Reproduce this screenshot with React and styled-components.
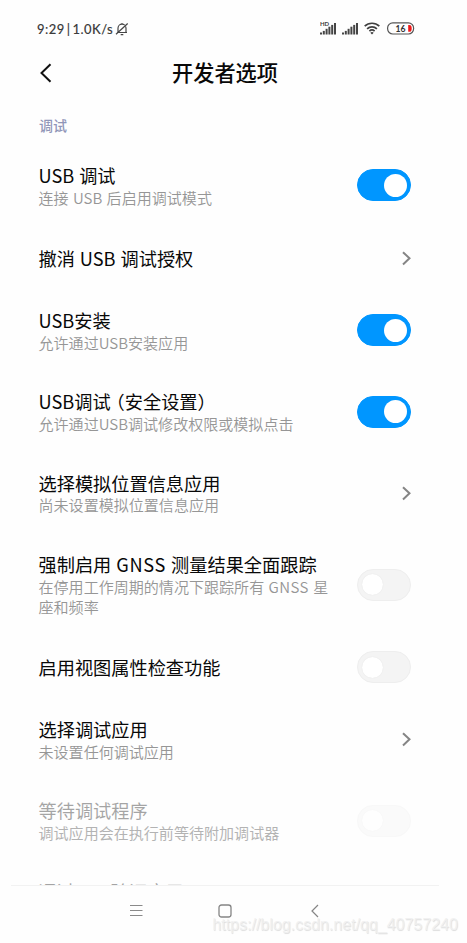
import React from 'react';
import styled, { createGlobalStyle } from 'styled-components';

const Global = createGlobalStyle`
  *, *::before, *::after { box-sizing: border-box; }
  body { margin: 0; background: #fefefe; }
`;

const Screen = styled.div`
  position: relative;
  width: 467px;
  height: 943px;
  overflow: hidden;
  display: flex;
  flex-direction: column;
  background: #fefefe;
  color: #080808;
  font-family: "Noto Sans CJK SC", sans-serif;
`;

const StatusBar = styled.div`
  display: flex;
  align-items: center;
  justify-content: space-between;
  height: 36px;
  padding: 21px 52px 0 37px;
  flex: none;
`;

const StatusGroup = styled.div`
  display: flex;
  align-items: center;
`;

const StatusText = styled.span`
  font: 500 13px/16px Lato, "Noto Sans CJK SC", sans-serif;
  letter-spacing: 0.45px;
  word-spacing: -1.7px;
  color: #3c3c3c;
  white-space: pre;
  -webkit-text-stroke: 0.1px #3c3c3c;
`;

const Header = styled.header`
  display: grid;
  grid-template-columns: 60px 1fr 60px;
  align-items: center;
  height: 73px;
  width: 450px;
  flex: none;
`;

const BackButton = styled.button`
  display: flex;
  justify-content: flex-end;
  padding: 0 8px 0 0;
  border: 0;
  background: none;
`;

const PageTitle = styled.h1`
  margin: -2px 0 0;
  text-align: center;
  font-size: 21.2px;
  line-height: 30px;
  font-weight: 500;
`;

const SectionLabel = styled.div`
  height: 36px;
  padding: 6px 0 0 39px;
  flex: none;
  font-size: 14px;
  line-height: 20px;
  font-weight: 500;
  color: #9096b8;
`;

const List = styled.main`
  flex: 1;
  min-height: 0;
  overflow: hidden;
`;

const Row = styled.div`
  display: flex;
  align-items: center;
  justify-content: space-between;
  height: ${(p) => p.$height}px;
  padding: 0 55.7px 0 38.5px;
  opacity: ${(p) => (p.$disabled ? 0.36 : 1)};
`;

const Texts = styled.div`
  width: 296px;
  margin-top: -0.4px;
`;

const Title = styled.div`
  font-size: 18.2px;
  line-height: 24px;
  word-spacing: 0.9px;
  white-space: nowrap;
`;

const Summary = styled.div`
  font-size: 15.05px;
  line-height: 20.3px;
  margin-top: 0.8px;
  word-spacing: 1px;
  font-weight: ${(p) => (p.$disabled ? 400 : 350)};
  color: ${(p) => (p.$disabled ? '#303030' : '#969696')};
`;

const Spaced = styled.span`
  letter-spacing: ${(p) => p.$by}px;
`;

const Paren = styled.span`
  margin-left: ${(p) => (p.$open ? -4 : 0)}px;
`;

const Switch = styled.span`
  display: flex;
  align-items: center;
  flex: none;
  width: 54px;
  height: 32px;
  border-radius: 16px;
  padding: 0 4px;
  margin-top: -0.5px;
  justify-content: ${(p) => (p.$on ? 'flex-end' : 'flex-start')};
  background: ${(p) => (p.$on ? '#0096ff' : '#f4f4f4')};
  border: 1px solid ${(p) => (p.$on ? '#0096ff' : '#eeeeee')};
`;

const Knob = styled.span`
  width: ${(p) => (p.$on ? 23 : 21)}px;
  height: ${(p) => (p.$on ? 23 : 21)}px;
  margin-right: ${(p) => (p.$on ? -1 : 0)}px;
  border-radius: 50%;
  background: #fff;
  box-shadow: 0 0 1px ${(p) => (p.$on ? 'transparent' : '#dddddd')};
`;

const NavBar = styled.nav`
  display: flex;
  align-items: flex-start;
  height: 58px;
  flex: none;
  margin: 0 28px 0 11px;
  padding: 18px 0 0 118px;
  border-top: 1px solid #f2f2f2;
`;

const NavButton = styled.span`
  display: flex;
  width: 89px;
`;

const Watermark = styled.div`
  position: absolute;
  right: 9px;
  bottom: 9px;
  font: 16px/18px "Liberation Sans", Arial, sans-serif;
  color: rgba(240, 240, 240, 0.9);
  text-shadow: 0.6px 0.6px 0.8px rgba(0, 0, 0, 0.13);
`;

const MutedBell = () => (
  <svg width="14" height="14" viewBox="0 0 14 14" fill="none" stroke="#454545" strokeWidth="1.2">
    <path d="M2 10.5h10M3 10.2V6.2a4 4 0 0 1 8 0v4M7 1v1.2M5.7 12.6h2.6M1 12.3L12.7 1.5" />
  </svg>
);

const SignalBars = ({ hd }) => (
  <svg width="22" height="15" viewBox="0 0 22 15">
    {hd && (
      <text x="0" y="5.2" fontSize="6" fontWeight="700" fontFamily="Lato, sans-serif" fill="#3c3c3c">HD</text>
    )}
    <g fill="#454545">
      <rect x="0" y="11.5" width="2" height="2" />
      <rect x="2.8" y="9.9" width="2" height="3.6" />
      <rect x="5.6" y="7.8" width="2" height="5.7" />
      <rect x="8.4" y="5.7" width="2" height="7.8" />
      <rect x="11.2" y="3.9" width="2" height="9.6" />
      <rect x="14" y="2" width="2" height="11.5" />
    </g>
  </svg>
);

const Wifi = () => (
  <svg width="16" height="13" viewBox="0 0 16 13" fill="none" stroke="#404040" strokeWidth="1.7">
    <path d="M.7 4.2a10.5 10.5 0 0 1 14.6 0M3.1 6.8a7 7 0 0 1 9.8 0M5.4 9.2a3.8 3.8 0 0 1 5.2 0" />
    <path d="M6.3 10.7L8 12.5l1.7-1.8a2.6 2.6 0 0 0-3.4 0z" fill="#404040" stroke="none" />
  </svg>
);

const Battery = () => (
  <svg width="28" height="13" viewBox="0 0 28 13">
    <rect x=".6" y=".8" width="26" height="11.2" rx="5.2" fill="none" stroke="#555" strokeWidth="1.2" />
    <path d="M21.2 3h1.2a2.3 3.4 0 0 1 0 6.8h-1.2z" fill="#f01818" />
    <text x="8.6" y="9.7" fontSize="8.6" fontWeight="700" fontFamily="Lato, sans-serif" fill="#333">16</text>
  </svg>
);

const StatusIcons = styled(StatusGroup)`
  & > svg:last-child { margin-left: 7px; }
`;

const BackArrow = () => (
  <svg width="13" height="20" viewBox="0 0 13 20" fill="none" stroke="#111" strokeWidth="2">
    <path d="M11.5 1.2L2.5 10l9 8.8" />
  </svg>
);

const Chevron = () => (
  <svg width="10" height="15" viewBox="0 0 10 15" fill="none" stroke="#858585" strokeWidth="2">
    <path d="M2 1.2L8.5 7.3 2 13.5" />
  </svg>
);

const rows = [
  { title: 'USB 调试', summary: '连接 USB 后启用调试模式', control: 'on' },
  { title: '撤消 USB 调试授权', control: 'link' },
  { title: 'USB安装', summary: '允许通过USB安装应用', control: 'on' },
  {
    title: <>USB调试<Paren $open>（</Paren>安全设置<Paren>）</Paren></>,
    summary: '允许通过USB调试修改权限或模拟点击',
    control: 'on',
  },
  { title: '选择模拟位置信息应用', summary: '尚未设置模拟位置信息应用', control: 'link' },
  {
    title: <>强制启用 <Spaced $by={0.7}>GNSS</Spaced> 测量结果全面跟踪</>,
    summary: <>在停用工作周期的情况下跟踪所有 <Spaced $by={0.4}>GNSS</Spaced> 星座和频率</>,
    control: 'off',
    height: 101.5,
  },
  { title: '启用视图属性检查功能', control: 'off' },
  { title: '选择调试应用', summary: '未设置任何调试应用', control: 'link' },
  { title: '等待调试程序', summary: '调试应用会在执行前等待附加调试器', control: 'off', disabled: true },
  { title: '通过USB验证应用', summary: '\u00a0', control: 'off', disabled: true, height: 79.6 },
];

const Control = ({ type }) => {
  if (type === 'link') return <Chevron />;
  const on = type === 'on';
  return <Switch $on={on}><Knob $on={on} /></Switch>;
};

export default function App() {
  return (
    <Screen>
      <Global />
      <StatusBar>
        <StatusGroup>
          <StatusText>9:29 | 1.0K/s </StatusText>
          <MutedBell />
        </StatusGroup>
        <StatusIcons>
          <SignalBars hd />
          <SignalBars />
          <Wifi />
          <Battery />
        </StatusIcons>
      </StatusBar>
      <Header>
        <BackButton><BackArrow /></BackButton>
        <PageTitle>开发者选项</PageTitle>
      </Header>
      <SectionLabel>调试</SectionLabel>
      <List>
        {rows.map((row, i) => (
          <Row key={i} $height={row.height || (row.summary ? 81.4 : 63.5)} $disabled={row.disabled}>
            <Texts>
              <Title>{row.title}</Title>
              {row.summary && <Summary $disabled={row.disabled}>{row.summary}</Summary>}
            </Texts>
            <Control type={row.control} />
          </Row>
        ))}
      </List>
      <NavBar>
        <NavButton>
          <svg width="14" height="13" viewBox="0 0 14 13" stroke="#8a8a8a" strokeWidth="1.2">
            <path d="M1 1.5h12.5M1 6.5h12.5M1 11.5h12.5" />
          </svg>
        </NavButton>
        <NavButton>
          <svg width="14" height="14" viewBox="0 0 14 14" fill="none" stroke="#858585" strokeWidth="1.3">
            <rect x="1" y="1" width="12" height="12" rx="2.5" />
          </svg>
        </NavButton>
        <NavButton>
          <svg width="14" height="14" viewBox="0 0 14 14" fill="none" stroke="#858585" strokeWidth="1.2">
            <path d="M11 1L5 7l6 6" />
          </svg>
        </NavButton>
      </NavBar>
      <Watermark>https://blog.csdn.net/qq_40757240</Watermark>
    </Screen>
  );
}
